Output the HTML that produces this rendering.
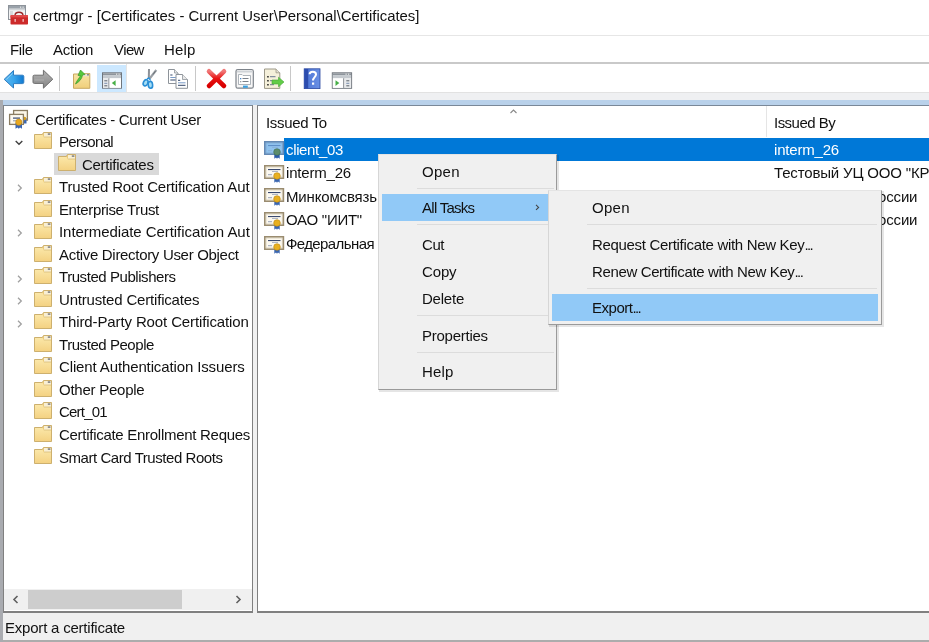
<!DOCTYPE html>
<html><head><meta charset="utf-8"><style>
*{margin:0;padding:0;box-sizing:border-box}
html,body{width:929px;height:642px;overflow:hidden;background:#f0f0f0}
body{position:relative;font-family:"Liberation Sans",sans-serif}
.t{position:absolute;white-space:nowrap;line-height:20px;font-size:15px;letter-spacing:-0.3px;will-change:transform}
.r{position:absolute}
.ic{position:absolute;display:block}
</style></head><body>
<svg width="0" height="0" style="position:absolute"><defs><linearGradient id="fold" x1="0" y1="0" x2="0" y2="1"><stop offset="0" stop-color="#fbe7a8"/><stop offset="1" stop-color="#f4d283"/></linearGradient></defs></svg><div class="r" style="left:0;top:0;width:929px;height:35px;background:#fff"></div><div class="r" style="left:0;top:35px;width:929px;height:1px;background:#e6e6e6"></div><svg class="ic" style="left:0px;top:0px" width="32" height="30" viewBox="0 0 32 30">
<rect x="8.5" y="5.5" width="17" height="14" fill="#f2f3f4" stroke="#8d939a" stroke-width="1"/>
<rect x="9" y="6" width="16" height="2.6" fill="#9aa2aa"/>
<rect x="20" y="6.6" width="1.2" height="1.2" fill="#e6e6e6"/><rect x="22.5" y="6.6" width="1.2" height="1.2" fill="#e6e6e6"/>
<rect x="9" y="9.2" width="16" height="1" fill="#c8ccd0"/>
<rect x="10" y="11" width="3" height="4" fill="#d6dadd"/>
<path d="M15 15.5 Q15 12.3 19 12.3 Q23 12.3 23 15.5" fill="none" stroke="#9a2a2a" stroke-width="1.4"/>
<rect x="10.5" y="15.2" width="17.5" height="9.4" rx="0.8" fill="#cc2a2a"/>
<rect x="10.5" y="15.2" width="17.5" height="2.2" fill="#e04848"/>
<rect x="14.5" y="19" width="1.3" height="2.8" fill="#f4c8c8"/>
<rect x="22.5" y="19" width="1.3" height="2.8" fill="#f4c8c8"/>
</svg><div class="t" style="left:32.6px;top:6.00px;color:#111;font-size:14.9px;letter-spacing:0">certmgr - [Certificates - Current User\Personal\Certificates]</div>
<div class="r" style="left:0;top:36px;width:929px;height:26px;background:#fff"></div><div class="r" style="left:0;top:62px;width:929px;height:2px;background:#c9c9c9"></div><div class="t" style="left:10.2px;top:39.80px;color:#111;font-size:15px;letter-spacing:-0.318px">File</div>
<div class="t" style="left:53.4px;top:39.80px;color:#111;font-size:15px;letter-spacing:-0.245px">Action</div>
<div class="t" style="left:114.1px;top:39.80px;color:#111;font-size:15px;letter-spacing:-0.595px">View</div>
<div class="t" style="left:163.7px;top:39.80px;color:#111;font-size:15px;letter-spacing:0.123px">Help</div>
<div class="r" style="left:0;top:64px;width:929px;height:28px;background:#fff"></div><div class="r" style="left:59px;top:66px;width:1px;height:25px;background:#c8c8c8"></div><div class="r" style="left:194.5px;top:66px;width:1px;height:25px;background:#c8c8c8"></div><div class="r" style="left:290px;top:66px;width:1px;height:25px;background:#c8c8c8"></div><div class="r" style="left:97px;top:65px;width:29px;height:27px;background:#cce8ff"></div><div class="r" style="left:126px;top:64px;width:1px;height:28px;background:#e4e4e4"></div><svg class="ic" style="left:0px;top:64px" width="30" height="28" viewBox="0 64 30 28">
<defs><linearGradient id="gb" x1="0" y1="0" x2="1" y2="0"><stop offset="0" stop-color="#5db6ee"/><stop offset="0.5" stop-color="#3aa6ec"/><stop offset="1" stop-color="#1078d0"/></linearGradient></defs>
<path d="M4.2 79.3 L13.5 70.5 V75.2 H22.5 Q23.8 75.2 23.8 76.5 V82.3 Q23.8 83.6 22.5 83.6 H13.5 V88 Z" fill="url(#gb)" stroke="#2f7cc0" stroke-width="1"/>
<path d="M6.5 79.3 L12.5 73.5" stroke="#a8dcf8" stroke-width="1" opacity="0.7"/>
</svg><svg class="ic" style="left:28px;top:64px" width="30" height="28" viewBox="28 64 30 28">
<defs><linearGradient id="gf" x1="0" y1="0" x2="0" y2="1"><stop offset="0" stop-color="#b4b4b4"/><stop offset="1" stop-color="#858585"/></linearGradient></defs>
<path d="M52.8 79.2 L43.4 70.2 V75.2 H34.3 Q33 75.2 33 76.5 V82.1 Q33 83.4 34.3 83.4 H43.4 V88.2 Z" fill="url(#gf)" stroke="#6e6e6e" stroke-width="1"/>
<path d="M34.5 80 H44" stroke="#c8c8c8" stroke-width="0.8" opacity="0.6"/>
</svg><svg class="ic" style="left:68px;top:64px" width="28" height="28" viewBox="68 64 28 28">
<defs><linearGradient id="gfu" x1="0" y1="0" x2="0" y2="1"><stop offset="0" stop-color="#f8e4a6"/><stop offset="1" stop-color="#f0cf7a"/></linearGradient></defs>
<path d="M73.5 74 H81 L82.5 73.5 H89.8 V88.3 H73.5 Z" fill="url(#gfu)" stroke="#c8a860" stroke-width="1"/>
<rect x="83" y="73.8" width="6" height="2.5" fill="#e8e4d8"/>
<rect x="87" y="74" width="2" height="1.5" fill="#8a8a8a"/>
<path d="M75.5 84 C77 80 79.5 78 80.5 75.5 L78 75.5 L80.5 70 L85 74.5 L82.5 75 C82 79 79 82 75.5 84 Z" fill="#55c83c" stroke="#3a9a2a" stroke-width="0.7"/>
</svg><svg class="ic" style="left:96px;top:64px" width="32" height="28" viewBox="96 64 32 28">
<rect x="102.5" y="72.8" width="19" height="15.4" fill="#f4f4f4" stroke="#6f757c" stroke-width="1"/>
<rect x="103" y="73.3" width="18" height="2" fill="#8d949b"/>
<rect x="103" y="75.3" width="18" height="3" fill="#c4c9ce"/>
<rect x="116" y="73.6" width="1.2" height="1.2" fill="#e8e8e8"/><rect x="118.5" y="73.6" width="1.2" height="1.2" fill="#e8e8e8"/>
<rect x="103" y="78.3" width="5.5" height="9.5" fill="#e8eaec"/>
<rect x="108.5" y="78.3" width="1" height="9.5" fill="#6f757c"/>
<rect x="104.3" y="80.3" width="3" height="1" fill="#5a6068"/><rect x="104.3" y="82.8" width="3" height="1" fill="#7a8fb0"/><rect x="104.3" y="85.3" width="3" height="1" fill="#5a6068"/>
<rect x="109.5" y="78.3" width="11.5" height="9.5" fill="#fff"/>
<path d="M115.6 80.2 V86 L111.8 83.1 Z" fill="#48b048"/>
</svg><svg class="ic" style="left:138px;top:64px" width="24" height="28" viewBox="138 64 24 28">
<path d="M149 69 L148.8 79" stroke="#8c9198" stroke-width="2"/>
<path d="M156.3 70 L149.7 78.5" stroke="#9aa0a6" stroke-width="2.2"/>
<path d="M155.5 71 L153 74.5" stroke="#5e646a" stroke-width="0.8"/>
<ellipse cx="145.6" cy="82.8" rx="2.2" ry="3.2" transform="rotate(25 145.6 82.8)" fill="#a6def5" stroke="#2b8fd6" stroke-width="1.6"/>
<ellipse cx="150.4" cy="84.8" rx="2.2" ry="3.4" transform="rotate(-8 150.4 84.8)" fill="#a6def5" stroke="#2b8fd6" stroke-width="1.6"/>
<path d="M147 79 L149 78 L150.5 80.5" fill="none" stroke="#2b8fd6" stroke-width="1.4"/>
</svg><svg class="ic" style="left:164px;top:64px" width="28" height="28" viewBox="164 64 28 28">
<path d="M168.5 69.5 H174.5 L178 73 V83.5 H168.5 Z" fill="#fff" stroke="#8e949a" stroke-width="1"/>
<path d="M174.5 69.5 V73 H178" fill="#e8e8e8" stroke="#8e949a" stroke-width="0.8"/>
<rect x="170.3" y="74.5" width="2.2" height="1" fill="#34486a"/><rect x="170.3" y="77" width="5.5" height="1" fill="#7a9cc8"/><rect x="170.3" y="79.5" width="5.5" height="1" fill="#34486a"/>
<path d="M176 74.5 H182.5 L187.5 79.5 V88.3 H176 Z" fill="#fff" stroke="#8e949a" stroke-width="1"/>
<path d="M182.5 74.5 V79.5 H187.5" fill="#e8e8e8" stroke="#8e949a" stroke-width="0.8"/>
<rect x="178" y="79.8" width="2.2" height="1" fill="#34486a"/><rect x="178" y="82.3" width="7.5" height="1" fill="#7a9cc8"/><rect x="178" y="84.8" width="7.5" height="1" fill="#34486a"/>
</svg><svg class="ic" style="left:202px;top:64px" width="28" height="28" viewBox="202 64 28 28">
<defs><linearGradient id="gx" x1="0" y1="0" x2="0" y2="1"><stop offset="0" stop-color="#f07878"/><stop offset="0.5" stop-color="#e81010"/><stop offset="1" stop-color="#d80000"/></linearGradient></defs>
<path d="M209 71.3 L224 86 M224 71.3 L209 86" stroke="url(#gx)" stroke-width="4.6" stroke-linecap="round"/>
</svg><svg class="ic" style="left:232px;top:64px" width="26" height="28" viewBox="232 64 26 28">
<rect x="236" y="69.5" width="17.3" height="18.7" rx="1.8" fill="#f6f6f6" stroke="#7d838a" stroke-width="1.2"/>
<rect x="237" y="70.5" width="15.3" height="2" fill="#cfd3d7"/>
<path d="M238.5 74.5 H242 L243 75.5 H250.5 V84.5 H238.5 Z" fill="#fff" stroke="#9aa2aa" stroke-width="0.8"/>
<rect x="240" y="78" width="1.3" height="1.3" fill="#4a8ad0"/><rect x="242.5" y="78" width="6" height="1" fill="#7a8088"/>
<rect x="240" y="81" width="1.3" height="1.3" fill="#9aa0a6"/><rect x="242.5" y="81" width="6" height="1" fill="#7a8088"/>
<rect x="243" y="85.6" width="4.8" height="2.2" fill="#3aa0e0"/>
</svg><svg class="ic" style="left:260px;top:64px" width="28" height="28" viewBox="260 64 28 28">
<path d="M264.5 69 H276 L279.8 72.8 V88.4 H264.5 Z" fill="#f5f0da" stroke="#9c9888" stroke-width="1"/>
<path d="M276 69 V72.8 H279.8" fill="#e4e0d0" stroke="#9c9888" stroke-width="0.8"/>
<rect x="267.2" y="76" width="1.5" height="1.5" fill="#222"/><rect x="270" y="76.2" width="5.5" height="1" fill="#6a7890"/>
<rect x="267.2" y="80" width="1.5" height="1.5" fill="#222"/><rect x="270" y="80.2" width="4" height="1" fill="#6a7890"/>
<rect x="267.2" y="84" width="1.5" height="1.5" fill="#222"/><rect x="270" y="84.2" width="4" height="1" fill="#6a7890"/>
<path d="M272 80 H278.5 V77.2 L284 82 L278.5 86.8 V84 H272 Z" fill="#62cc48" stroke="#48a838" stroke-width="0.6"/>
</svg><svg class="ic" style="left:300px;top:64px" width="24" height="28" viewBox="300 64 24 28">
<defs><linearGradient id="gh" x1="0" y1="0" x2="1" y2="0"><stop offset="0" stop-color="#4c74d4"/><stop offset="1" stop-color="#6a90e4"/></linearGradient></defs>
<rect x="304.2" y="68.8" width="15.8" height="19.8" fill="url(#gh)" stroke="#2a48a0" stroke-width="0.8"/>
<rect x="304.4" y="69" width="3.8" height="19.4" fill="#2c4cae"/>
<path d="M309.6 74.3 C309.6 71 316 70.8 316 74.5 C316 77 313 77.3 313 80.5" fill="none" stroke="#fff" stroke-width="2"/>
<rect x="312" y="82.5" width="2.2" height="2.2" fill="#fff"/>
</svg><svg class="ic" style="left:328px;top:64px" width="28" height="28" viewBox="328 64 28 28">
<rect x="332.3" y="72.8" width="19.3" height="15.5" fill="#f4f4f4" stroke="#6f757c" stroke-width="1"/>
<rect x="332.8" y="73.3" width="18.3" height="2" fill="#8d949b"/>
<rect x="332.8" y="75.3" width="18.3" height="3" fill="#c4c9ce"/>
<rect x="345.5" y="73.6" width="1.2" height="1.2" fill="#e8e8e8"/><rect x="348" y="73.6" width="1.2" height="1.2" fill="#e8e8e8"/>
<rect x="332.8" y="78.3" width="10.5" height="9.5" fill="#fff"/>
<path d="M335.5 80.2 V86 L339.3 83.1 Z" fill="#48b048"/>
<rect x="343.3" y="78.3" width="1" height="9.5" fill="#6f757c"/>
<rect x="344.3" y="78.3" width="6.8" height="9.5" fill="#e8eaec"/>
<rect x="346.3" y="80.3" width="3" height="1" fill="#5a6068"/><rect x="346.3" y="82.8" width="3" height="1" fill="#7a8fb0"/><rect x="346.3" y="85.3" width="3" height="1" fill="#5a6068"/>
</svg><div class="r" style="left:0;top:92px;width:929px;height:8px;background:#eff0f2"></div><div class="r" style="left:0;top:92px;width:929px;height:1px;background:#e2e2e2"></div><div class="r" style="left:0;top:100px;width:929px;height:5px;background:#b9d1ea"></div><div class="r" style="left:0;top:100px;width:3px;height:542px;background:#a9abb0"></div><div class="r" style="left:3px;top:105px;width:250px;height:508px;background:#fff;border-top:1px solid #7a8898;border-left:1px solid #808080;border-right:1px solid #808080;border-bottom:2px solid #808080;overflow:hidden"><div class="r" style="left:-4px;top:-106px;width:929px;height:642px"><svg class="ic" style="left:4px;top:106px" width="30" height="26" viewBox="4 106 30 26">
<rect x="13.6" y="110.5" width="13.8" height="9.6" fill="#fbf6e8" stroke="#8a7c62" stroke-width="1.3"/>
<rect x="24" y="118" width="2.5" height="5.5" fill="#3a66b0"/>
<circle cx="24.5" cy="118.5" r="1.8" fill="#d8a020"/>
<rect x="9.6" y="114.4" width="13.8" height="10" fill="#fcf9f0" stroke="#8a7c62" stroke-width="1.3"/>
<rect x="13" y="117.5" width="7" height="1.2" fill="#3a4a70"/>
<rect x="13" y="120.3" width="3.5" height="1" fill="#8a94a8"/>
<path d="M15.5 123 V128.7 L17.5 127.5 L18.8 128.7 L20 127.5 L22 128.7 V123 Z" fill="#3a64b0"/>
<circle cx="18.8" cy="122.2" r="3.1" fill="#e8a820" stroke="#c08810" stroke-width="0.6"/>
</svg><div class="t" style="left:34.6px;top:109.60px;color:#111;font-size:15px;letter-spacing:-0.308px">Certificates - Current User</div>
<svg class="ic" style="left:15px;top:140.1px" width="8" height="6" viewBox="0 0 8 6"><path d="M0.7 1 L4 4.3 L7.3 1" fill="none" stroke="#404040" stroke-width="1.4"/></svg><svg class="ic" style="left:34px;top:132px" width="18" height="17" viewBox="0 0 18 17">
<path d="M0.5 2.5 H8.3 L9.5 0.5 H17.5 V16.5 H0.5 Z" fill="#ecca78" stroke="#cdb06e" stroke-width="1"/>
<rect x="10" y="1" width="7" height="4" fill="#f8efd4"/>
<rect x="13.8" y="1.2" width="2.6" height="1.8" fill="#8e8e8e"/>
<path d="M1 3 H8.6 L9.8 5 H17 V16 H1 Z" fill="url(#fold)"/>
<path d="M9.8 5 H17" stroke="#d8bc78" stroke-width="0.8"/>
</svg><div class="t" style="left:59.0px;top:132.13px;color:#111;font-size:15px;letter-spacing:-0.643px">Personal</div>
<div class="r" style="left:54px;top:152.6px;width:105px;height:22px;background:#d9d9d9"></div><svg class="ic" style="left:58px;top:154px" width="18" height="17" viewBox="0 0 18 17">
<path d="M0.5 2.5 H8.3 L9.5 0.5 H17.5 V16.5 H0.5 Z" fill="#ecca78" stroke="#cdb06e" stroke-width="1"/>
<rect x="10" y="1" width="7" height="4" fill="#f8efd4"/>
<rect x="13.8" y="1.2" width="2.6" height="1.8" fill="#8e8e8e"/>
<path d="M1 3 H8.6 L9.8 5 H17 V16 H1 Z" fill="url(#fold)"/>
<path d="M9.8 5 H17" stroke="#d8bc78" stroke-width="0.8"/>
</svg><div class="t" style="left:82.4px;top:154.66px;color:#111;font-size:15px;letter-spacing:-0.282px">Certificates</div>
<svg class="ic" style="left:17px;top:184.4px" width="6" height="8" viewBox="0 0 6 8"><path d="M1 0.7 L4.3 4 L1 7.3" fill="none" stroke="#a0a0a0" stroke-width="1.3"/></svg><svg class="ic" style="left:34px;top:177px" width="18" height="17" viewBox="0 0 18 17">
<path d="M0.5 2.5 H8.3 L9.5 0.5 H17.5 V16.5 H0.5 Z" fill="#ecca78" stroke="#cdb06e" stroke-width="1"/>
<rect x="10" y="1" width="7" height="4" fill="#f8efd4"/>
<rect x="13.8" y="1.2" width="2.6" height="1.8" fill="#8e8e8e"/>
<path d="M1 3 H8.6 L9.8 5 H17 V16 H1 Z" fill="url(#fold)"/>
<path d="M9.8 5 H17" stroke="#d8bc78" stroke-width="0.8"/>
</svg><div class="t" style="left:59.0px;top:177.19px;color:#111;font-size:15px;letter-spacing:-0.166px">Trusted Root Certification Aut</div>
<svg class="ic" style="left:34px;top:200px" width="18" height="17" viewBox="0 0 18 17">
<path d="M0.5 2.5 H8.3 L9.5 0.5 H17.5 V16.5 H0.5 Z" fill="#ecca78" stroke="#cdb06e" stroke-width="1"/>
<rect x="10" y="1" width="7" height="4" fill="#f8efd4"/>
<rect x="13.8" y="1.2" width="2.6" height="1.8" fill="#8e8e8e"/>
<path d="M1 3 H8.6 L9.8 5 H17 V16 H1 Z" fill="url(#fold)"/>
<path d="M9.8 5 H17" stroke="#d8bc78" stroke-width="0.8"/>
</svg><div class="t" style="left:59.0px;top:199.72px;color:#111;font-size:15px;letter-spacing:-0.38px">Enterprise Trust</div>
<svg class="ic" style="left:17px;top:229.4px" width="6" height="8" viewBox="0 0 6 8"><path d="M1 0.7 L4.3 4 L1 7.3" fill="none" stroke="#a0a0a0" stroke-width="1.3"/></svg><svg class="ic" style="left:34px;top:222px" width="18" height="17" viewBox="0 0 18 17">
<path d="M0.5 2.5 H8.3 L9.5 0.5 H17.5 V16.5 H0.5 Z" fill="#ecca78" stroke="#cdb06e" stroke-width="1"/>
<rect x="10" y="1" width="7" height="4" fill="#f8efd4"/>
<rect x="13.8" y="1.2" width="2.6" height="1.8" fill="#8e8e8e"/>
<path d="M1 3 H8.6 L9.8 5 H17 V16 H1 Z" fill="url(#fold)"/>
<path d="M9.8 5 H17" stroke="#d8bc78" stroke-width="0.8"/>
</svg><div class="t" style="left:59.0px;top:222.25px;color:#111;font-size:15px;letter-spacing:-0.062px">Intermediate Certification Aut</div>
<svg class="ic" style="left:34px;top:245px" width="18" height="17" viewBox="0 0 18 17">
<path d="M0.5 2.5 H8.3 L9.5 0.5 H17.5 V16.5 H0.5 Z" fill="#ecca78" stroke="#cdb06e" stroke-width="1"/>
<rect x="10" y="1" width="7" height="4" fill="#f8efd4"/>
<rect x="13.8" y="1.2" width="2.6" height="1.8" fill="#8e8e8e"/>
<path d="M1 3 H8.6 L9.8 5 H17 V16 H1 Z" fill="url(#fold)"/>
<path d="M9.8 5 H17" stroke="#d8bc78" stroke-width="0.8"/>
</svg><div class="t" style="left:59.0px;top:244.78px;color:#111;font-size:15px;letter-spacing:-0.311px">Active Directory User Object</div>
<svg class="ic" style="left:17px;top:274.5px" width="6" height="8" viewBox="0 0 6 8"><path d="M1 0.7 L4.3 4 L1 7.3" fill="none" stroke="#a0a0a0" stroke-width="1.3"/></svg><svg class="ic" style="left:34px;top:267px" width="18" height="17" viewBox="0 0 18 17">
<path d="M0.5 2.5 H8.3 L9.5 0.5 H17.5 V16.5 H0.5 Z" fill="#ecca78" stroke="#cdb06e" stroke-width="1"/>
<rect x="10" y="1" width="7" height="4" fill="#f8efd4"/>
<rect x="13.8" y="1.2" width="2.6" height="1.8" fill="#8e8e8e"/>
<path d="M1 3 H8.6 L9.8 5 H17 V16 H1 Z" fill="url(#fold)"/>
<path d="M9.8 5 H17" stroke="#d8bc78" stroke-width="0.8"/>
</svg><div class="t" style="left:59.0px;top:267.31px;color:#111;font-size:15px;letter-spacing:-0.441px">Trusted Publishers</div>
<svg class="ic" style="left:17px;top:297.0px" width="6" height="8" viewBox="0 0 6 8"><path d="M1 0.7 L4.3 4 L1 7.3" fill="none" stroke="#a0a0a0" stroke-width="1.3"/></svg><svg class="ic" style="left:34px;top:290px" width="18" height="17" viewBox="0 0 18 17">
<path d="M0.5 2.5 H8.3 L9.5 0.5 H17.5 V16.5 H0.5 Z" fill="#ecca78" stroke="#cdb06e" stroke-width="1"/>
<rect x="10" y="1" width="7" height="4" fill="#f8efd4"/>
<rect x="13.8" y="1.2" width="2.6" height="1.8" fill="#8e8e8e"/>
<path d="M1 3 H8.6 L9.8 5 H17 V16 H1 Z" fill="url(#fold)"/>
<path d="M9.8 5 H17" stroke="#d8bc78" stroke-width="0.8"/>
</svg><div class="t" style="left:59.0px;top:289.84px;color:#111;font-size:15px;letter-spacing:-0.181px">Untrusted Certificates</div>
<svg class="ic" style="left:17px;top:319.6px" width="6" height="8" viewBox="0 0 6 8"><path d="M1 0.7 L4.3 4 L1 7.3" fill="none" stroke="#a0a0a0" stroke-width="1.3"/></svg><svg class="ic" style="left:34px;top:312px" width="18" height="17" viewBox="0 0 18 17">
<path d="M0.5 2.5 H8.3 L9.5 0.5 H17.5 V16.5 H0.5 Z" fill="#ecca78" stroke="#cdb06e" stroke-width="1"/>
<rect x="10" y="1" width="7" height="4" fill="#f8efd4"/>
<rect x="13.8" y="1.2" width="2.6" height="1.8" fill="#8e8e8e"/>
<path d="M1 3 H8.6 L9.8 5 H17 V16 H1 Z" fill="url(#fold)"/>
<path d="M9.8 5 H17" stroke="#d8bc78" stroke-width="0.8"/>
</svg><div class="t" style="left:59.0px;top:312.37px;color:#111;font-size:15px;letter-spacing:-0.121px">Third-Party Root Certification</div>
<svg class="ic" style="left:34px;top:335px" width="18" height="17" viewBox="0 0 18 17">
<path d="M0.5 2.5 H8.3 L9.5 0.5 H17.5 V16.5 H0.5 Z" fill="#ecca78" stroke="#cdb06e" stroke-width="1"/>
<rect x="10" y="1" width="7" height="4" fill="#f8efd4"/>
<rect x="13.8" y="1.2" width="2.6" height="1.8" fill="#8e8e8e"/>
<path d="M1 3 H8.6 L9.8 5 H17 V16 H1 Z" fill="url(#fold)"/>
<path d="M9.8 5 H17" stroke="#d8bc78" stroke-width="0.8"/>
</svg><div class="t" style="left:59.0px;top:334.90px;color:#111;font-size:15px;letter-spacing:-0.446px">Trusted People</div>
<svg class="ic" style="left:34px;top:357px" width="18" height="17" viewBox="0 0 18 17">
<path d="M0.5 2.5 H8.3 L9.5 0.5 H17.5 V16.5 H0.5 Z" fill="#ecca78" stroke="#cdb06e" stroke-width="1"/>
<rect x="10" y="1" width="7" height="4" fill="#f8efd4"/>
<rect x="13.8" y="1.2" width="2.6" height="1.8" fill="#8e8e8e"/>
<path d="M1 3 H8.6 L9.8 5 H17 V16 H1 Z" fill="url(#fold)"/>
<path d="M9.8 5 H17" stroke="#d8bc78" stroke-width="0.8"/>
</svg><div class="t" style="left:59.0px;top:357.43px;color:#111;font-size:15px;letter-spacing:-0.125px">Client Authentication Issuers</div>
<svg class="ic" style="left:34px;top:380px" width="18" height="17" viewBox="0 0 18 17">
<path d="M0.5 2.5 H8.3 L9.5 0.5 H17.5 V16.5 H0.5 Z" fill="#ecca78" stroke="#cdb06e" stroke-width="1"/>
<rect x="10" y="1" width="7" height="4" fill="#f8efd4"/>
<rect x="13.8" y="1.2" width="2.6" height="1.8" fill="#8e8e8e"/>
<path d="M1 3 H8.6 L9.8 5 H17 V16 H1 Z" fill="url(#fold)"/>
<path d="M9.8 5 H17" stroke="#d8bc78" stroke-width="0.8"/>
</svg><div class="t" style="left:59.0px;top:379.96px;color:#111;font-size:15px;letter-spacing:-0.245px">Other People</div>
<svg class="ic" style="left:34px;top:402px" width="18" height="17" viewBox="0 0 18 17">
<path d="M0.5 2.5 H8.3 L9.5 0.5 H17.5 V16.5 H0.5 Z" fill="#ecca78" stroke="#cdb06e" stroke-width="1"/>
<rect x="10" y="1" width="7" height="4" fill="#f8efd4"/>
<rect x="13.8" y="1.2" width="2.6" height="1.8" fill="#8e8e8e"/>
<path d="M1 3 H8.6 L9.8 5 H17 V16 H1 Z" fill="url(#fold)"/>
<path d="M9.8 5 H17" stroke="#d8bc78" stroke-width="0.8"/>
</svg><div class="t" style="left:59.0px;top:402.49px;color:#111;font-size:15px;letter-spacing:-0.8px">Cert_01</div>
<svg class="ic" style="left:34px;top:425px" width="18" height="17" viewBox="0 0 18 17">
<path d="M0.5 2.5 H8.3 L9.5 0.5 H17.5 V16.5 H0.5 Z" fill="#ecca78" stroke="#cdb06e" stroke-width="1"/>
<rect x="10" y="1" width="7" height="4" fill="#f8efd4"/>
<rect x="13.8" y="1.2" width="2.6" height="1.8" fill="#8e8e8e"/>
<path d="M1 3 H8.6 L9.8 5 H17 V16 H1 Z" fill="url(#fold)"/>
<path d="M9.8 5 H17" stroke="#d8bc78" stroke-width="0.8"/>
</svg><div class="t" style="left:59.0px;top:425.02px;color:#111;font-size:15px;letter-spacing:-0.282px">Certificate Enrollment Reques</div>
<svg class="ic" style="left:34px;top:447px" width="18" height="17" viewBox="0 0 18 17">
<path d="M0.5 2.5 H8.3 L9.5 0.5 H17.5 V16.5 H0.5 Z" fill="#ecca78" stroke="#cdb06e" stroke-width="1"/>
<rect x="10" y="1" width="7" height="4" fill="#f8efd4"/>
<rect x="13.8" y="1.2" width="2.6" height="1.8" fill="#8e8e8e"/>
<path d="M1 3 H8.6 L9.8 5 H17 V16 H1 Z" fill="url(#fold)"/>
<path d="M9.8 5 H17" stroke="#d8bc78" stroke-width="0.8"/>
</svg><div class="t" style="left:59.0px;top:447.55px;color:#111;font-size:15px;letter-spacing:-0.448px">Smart Card Trusted Roots</div>
<div class="r" style="left:4px;top:589px;width:248px;height:21px;background:#f0f0f0"></div><div class="r" style="left:27.5px;top:589.5px;width:154px;height:19.5px;background:#cdcdcd"></div><svg class="ic" style="left:12px;top:595px" width="7" height="9" viewBox="0 0 7 9"><path d="M5.5 1 L2 4.5 L5.5 8" fill="none" stroke="#606060" stroke-width="1.6"/></svg><svg class="ic" style="left:235px;top:595px" width="7" height="9" viewBox="0 0 7 9"><path d="M1.5 1 L5 4.5 L1.5 8" fill="none" stroke="#606060" stroke-width="1.6"/></svg></div></div><div class="r" style="left:257px;top:105px;width:672px;height:508px;background:#fff;border-top:1px solid #7a8898;border-left:1px solid #808080;border-bottom:2px solid #808080;overflow:hidden"><div class="r" style="left:-258px;top:-106px;width:929px;height:642px"><div class="t" style="left:266.0px;top:113.30px;color:#111;font-size:15px;letter-spacing:-0.340px">Issued To</div>
<div class="t" style="left:773.6px;top:113.30px;color:#111;font-size:15px;letter-spacing:-0.530px">Issued By</div>
<div class="r" style="left:766px;top:106px;width:1px;height:31px;background:#e5e5e5"></div><svg class="ic" style="left:510px;top:108.5px" width="7" height="5" viewBox="0 0 7 5"><path d="M0.5 4 L3.5 1 L6.5 4" fill="none" stroke="#888" stroke-width="1.1"/></svg><div class="r" style="left:284px;top:137.7px;width:645px;height:23px;background:#0078d7"></div><svg class="ic" style="left:263px;top:140px" width="22" height="20" viewBox="-1 -1 22 20">
<rect x="0.8" y="0.8" width="18.6" height="12.4" fill="#8fc2ee" stroke="#6489b4" stroke-width="1.6"/>
<rect x="2" y="2" width="16.2" height="10" fill="none" stroke="#7aa0c8" stroke-width="0.6"/>
<rect x="4" y="4" width="12.5" height="1.1" fill="#5f8fc8"/>
<rect x="8" y="6.2" width="6" height="0.8" fill="#8ab0d8"/>
<rect x="4" y="9.2" width="4" height="1" fill="#8ab0d8"/>
<path d="M10.3 12.5 L10.3 17.7 L12 16.5 L13 17.7 L14 16.5 L15.7 17.7 L15.7 12.5 Z" fill="#2a5aa8"/>
<circle cx="13" cy="11" r="3.3" fill="#5c8c6c" stroke="#3f6f52" stroke-width="0.6"/>
</svg><div class="t" style="left:286.3px;top:139.60px;color:#fff;font-size:15px;letter-spacing:-0.353px">client_03</div>
<div class="t" style="left:773.6px;top:139.60px;color:#fff;font-size:15px;letter-spacing:-0.186px">interm_26</div>
<svg class="ic" style="left:263px;top:164px" width="22" height="20" viewBox="-1 -1 22 20">
<rect x="0.8" y="0.8" width="18.6" height="12.4" fill="#fcf9f0" stroke="#9a8c70" stroke-width="1.6"/>
<rect x="2" y="2" width="16.2" height="10" fill="none" stroke="#c8bca4" stroke-width="0.6"/>
<rect x="4" y="4" width="12.5" height="1.1" fill="#3a4a70"/>
<rect x="8" y="6.2" width="6" height="0.8" fill="#9aa4b8"/>
<rect x="4" y="9.2" width="4" height="1" fill="#9aa4b8"/>
<path d="M10.3 12.5 L10.3 17.7 L12 16.5 L13 17.7 L14 16.5 L15.7 17.7 L15.7 12.5 Z" fill="#3a66b0"/>
<circle cx="13" cy="11" r="3.3" fill="#e8b020" stroke="#c08810" stroke-width="0.6"/>
</svg><div class="t" style="left:286.3px;top:163.22px;color:#111;font-size:15px;letter-spacing:-0.186px">interm_26</div>
<div class="t" style="left:773.6px;top:163.22px;color:#111;font-size:15px;letter-spacing:-0.163px">Тестовый УЦ ООО "КРИПТО-ПРО"</div>
<svg class="ic" style="left:263px;top:187px" width="22" height="20" viewBox="-1 -1 22 20">
<rect x="0.8" y="0.8" width="18.6" height="12.4" fill="#fcf9f0" stroke="#9a8c70" stroke-width="1.6"/>
<rect x="2" y="2" width="16.2" height="10" fill="none" stroke="#c8bca4" stroke-width="0.6"/>
<rect x="4" y="4" width="12.5" height="1.1" fill="#3a4a70"/>
<rect x="8" y="6.2" width="6" height="0.8" fill="#9aa4b8"/>
<rect x="4" y="9.2" width="4" height="1" fill="#9aa4b8"/>
<path d="M10.3 12.5 L10.3 17.7 L12 16.5 L13 17.7 L14 16.5 L15.7 17.7 L15.7 12.5 Z" fill="#3a66b0"/>
<circle cx="13" cy="11" r="3.3" fill="#e8b020" stroke="#c08810" stroke-width="0.6"/>
</svg><div class="t" style="left:286.3px;top:186.84px;color:#111;font-size:15px;letter-spacing:-0.163px">Минкомсвязь России</div>
<div class="t" style="left:773.6px;top:186.84px;color:#111;font-size:15px;letter-spacing:-0.163px">Минкомсвязь России</div>
<svg class="ic" style="left:263px;top:211px" width="22" height="20" viewBox="-1 -1 22 20">
<rect x="0.8" y="0.8" width="18.6" height="12.4" fill="#fcf9f0" stroke="#9a8c70" stroke-width="1.6"/>
<rect x="2" y="2" width="16.2" height="10" fill="none" stroke="#c8bca4" stroke-width="0.6"/>
<rect x="4" y="4" width="12.5" height="1.1" fill="#3a4a70"/>
<rect x="8" y="6.2" width="6" height="0.8" fill="#9aa4b8"/>
<rect x="4" y="9.2" width="4" height="1" fill="#9aa4b8"/>
<path d="M10.3 12.5 L10.3 17.7 L12 16.5 L13 17.7 L14 16.5 L15.7 17.7 L15.7 12.5 Z" fill="#3a66b0"/>
<circle cx="13" cy="11" r="3.3" fill="#e8b020" stroke="#c08810" stroke-width="0.6"/>
</svg><div class="t" style="left:286.3px;top:210.46px;color:#111;font-size:15px;letter-spacing:-0.253px">ОАО "ИИТ"</div>
<div class="t" style="left:773.6px;top:210.46px;color:#111;font-size:15px;letter-spacing:-0.163px">Минкомсвязь России</div>
<svg class="ic" style="left:263px;top:235px" width="22" height="20" viewBox="-1 -1 22 20">
<rect x="0.8" y="0.8" width="18.6" height="12.4" fill="#fcf9f0" stroke="#9a8c70" stroke-width="1.6"/>
<rect x="2" y="2" width="16.2" height="10" fill="none" stroke="#c8bca4" stroke-width="0.6"/>
<rect x="4" y="4" width="12.5" height="1.1" fill="#3a4a70"/>
<rect x="8" y="6.2" width="6" height="0.8" fill="#9aa4b8"/>
<rect x="4" y="9.2" width="4" height="1" fill="#9aa4b8"/>
<path d="M10.3 12.5 L10.3 17.7 L12 16.5 L13 17.7 L14 16.5 L15.7 17.7 L15.7 12.5 Z" fill="#3a66b0"/>
<circle cx="13" cy="11" r="3.3" fill="#e8b020" stroke="#c08810" stroke-width="0.6"/>
</svg><div class="t" style="left:286.3px;top:234.08px;color:#111;font-size:15px;letter-spacing:-0.601px">Федеральная налоговая служба</div>
</div></div><div class="r" style="left:0;top:613px;width:929px;height:27px;background:#f0f0f0"></div><div class="r" style="left:0;top:640px;width:929px;height:2px;background:#acacac"></div><div class="r" style="left:0;top:613px;width:3px;height:29px;background:#a9abb0"></div><div class="t" style="left:5.0px;top:617.80px;color:#111;font-size:15px;letter-spacing:-0.211px">Export a certificate</div>
<div class="r" style="left:379px;top:155px;width:179.6px;height:236.5px;background:rgba(0,0,0,0.10)"></div><div class="r" style="left:378px;top:154px;width:178.6px;height:235.5px;background:#f0f0f0;border-left:1px solid #d6d6d6;border-top:1px solid #e4e4e4;border-right:1px solid #9a9a9a;border-bottom:1px solid #9a9a9a"></div><div class="t" style="left:421.5px;top:162.10px;color:#111;font-size:15px;letter-spacing:0.258px">Open</div>
<div class="r" style="left:417px;top:188.1px;width:137px;height:1px;background:#dcdcdc"></div><div class="r" style="left:382px;top:193.8px;width:170px;height:27.3px;background:#91c9f7"></div><svg class="ic" style="left:534.5px;top:203.6px" width="5" height="7" viewBox="0 0 5 7"><path d="M1 0.9 L3.6 3.4 L1 5.9" fill="none" stroke="#444" stroke-width="1.1"/></svg><div class="t" style="left:421.5px;top:198.40px;color:#111;font-size:15px;letter-spacing:-0.723px">All Tasks</div>
<div class="r" style="left:417px;top:224.4px;width:137px;height:1px;background:#dcdcdc"></div><div class="t" style="left:421.5px;top:234.70px;color:#111;font-size:15px;letter-spacing:-0.400px">Cut</div>
<div class="t" style="left:421.5px;top:262.00px;color:#111;font-size:15px;letter-spacing:-0.131px">Copy</div>
<div class="t" style="left:421.5px;top:289.30px;color:#111;font-size:15px;letter-spacing:-0.228px">Delete</div>
<div class="r" style="left:417px;top:315.3px;width:137px;height:1px;background:#dcdcdc"></div><div class="t" style="left:421.5px;top:325.60px;color:#111;font-size:15px;letter-spacing:-0.249px">Properties</div>
<div class="r" style="left:417px;top:351.6px;width:137px;height:1px;background:#dcdcdc"></div><div class="t" style="left:421.5px;top:361.90px;color:#111;font-size:15px;letter-spacing:0.123px">Help</div>
<div class="r" style="left:549px;top:191.3px;width:334.5px;height:135.7px;background:rgba(0,0,0,0.10)"></div><div class="r" style="left:548px;top:190.3px;width:333.5px;height:134.7px;background:#f0f0f0;border-left:1px solid #d6d6d6;border-top:1px solid #e4e4e4;border-right:1px solid #9a9a9a;border-bottom:1px solid #9a9a9a"></div><div class="t" style="left:591.5px;top:198.20px;color:#111;font-size:15px;letter-spacing:0.258px">Open</div>
<div class="r" style="left:587px;top:224.4px;width:290px;height:1px;background:#dcdcdc"></div><div class="t" style="left:591.5px;top:234.50px;color:#111;font-size:15px;letter-spacing:-0.316px">Request Certificate with New Key<span style="letter-spacing:-1.6px">...</span></div>
<div class="t" style="left:591.5px;top:261.80px;color:#111;font-size:15px;letter-spacing:-0.364px">Renew Certificate with New Key<span style="letter-spacing:-1.6px">...</span></div>
<div class="r" style="left:587px;top:288.0px;width:290px;height:1px;background:#dcdcdc"></div><div class="r" style="left:552px;top:293.7px;width:325.5px;height:27.3px;background:#91c9f7"></div><div class="t" style="left:591.5px;top:298.10px;color:#111;font-size:15px;letter-spacing:-0.478px">Export<span style="letter-spacing:-1.6px">...</span></div>
</body></html>
